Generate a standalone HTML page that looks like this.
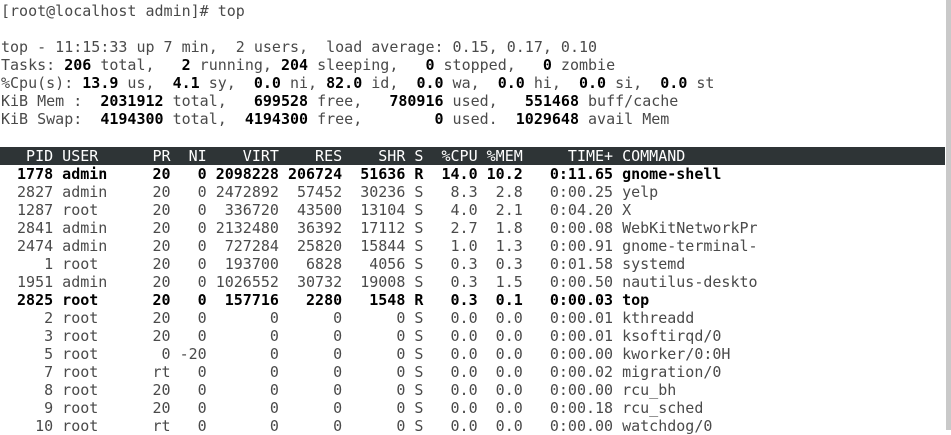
<!DOCTYPE html>
<html><head><meta charset="utf-8"><style>
html,body{margin:0;padding:0;background:#fff;width:951px;height:430px;overflow:hidden}
pre{margin:0;position:absolute;font-family:"DejaVu Sans Mono","Liberation Mono",monospace;font-size:15px;line-height:18px;color:#4a4a4a;white-space:pre}
#a{left:1px;top:2px}
#t{left:8px;top:147px}
b{color:#000;font-weight:bold}
.bar{position:absolute;left:0;top:147px;width:945px;height:18px;background:#2e3436}
.h{color:#fff}
.sb{position:absolute;left:946px;top:0;width:5px;height:430px;background:#c9c9c9}
</style></head><body>
<div class="bar"></div>
<pre id="a">[root@localhost admin]# top

top - 11:15:33 up 7 min,  2 users,  load average: 0.15, 0.17, 0.10
Tasks: <b>206</b> total,   <b>2</b> running, <b>204</b> sleeping,   <b>0</b> stopped,   <b>0</b> zombie
%Cpu(s): <b>13.9</b> us,  <b>4.1</b> sy,  <b>0.0</b> ni, <b>82.0</b> id,  <b>0.0</b> wa,  <b>0.0</b> hi,  <b>0.0</b> si,  <b>0.0</b> st
KiB Mem :  <b>2031912</b> total,   <b>699528</b> free,   <b>780916</b> used,   <b>551468</b> buff/cache
KiB Swap:  <b>4194300</b> total,  <b>4194300</b> free,        <b>0</b> used.  <b>1029648</b> avail Mem</pre>
<pre id="t"><span class="h">  PID USER      PR  NI    VIRT    RES    SHR S  %CPU %MEM     TIME+ COMMAND</span>
<b> 1778 admin     20   0 2098228 206724  51636 R  14.0 10.2   0:11.65 gnome-shell</b>
 2827 admin     20   0 2472892  57452  30236 S   8.3  2.8   0:00.25 yelp
 1287 root      20   0  336720  43500  13104 S   4.0  2.1   0:04.20 X
 2841 admin     20   0 2132480  36392  17112 S   2.7  1.8   0:00.08 WebKitNetworkPr
 2474 admin     20   0  727284  25820  15844 S   1.0  1.3   0:00.91 gnome-terminal-
    1 root      20   0  193700   6828   4056 S   0.3  0.3   0:01.58 systemd
 1951 admin     20   0 1026552  30732  19008 S   0.3  1.5   0:00.50 nautilus-deskto
<b> 2825 root      20   0  157716   2280   1548 R   0.3  0.1   0:00.03 top</b>
    2 root      20   0       0      0      0 S   0.0  0.0   0:00.01 kthreadd
    3 root      20   0       0      0      0 S   0.0  0.0   0:00.01 ksoftirqd/0
    5 root       0 -20       0      0      0 S   0.0  0.0   0:00.00 kworker/0:0H
    7 root      rt   0       0      0      0 S   0.0  0.0   0:00.02 migration/0
    8 root      20   0       0      0      0 S   0.0  0.0   0:00.00 rcu_bh
    9 root      20   0       0      0      0 S   0.0  0.0   0:00.18 rcu_sched
   10 root      rt   0       0      0      0 S   0.0  0.0   0:00.00 watchdog/0</pre>
<div class="sb"></div>
</body></html>
